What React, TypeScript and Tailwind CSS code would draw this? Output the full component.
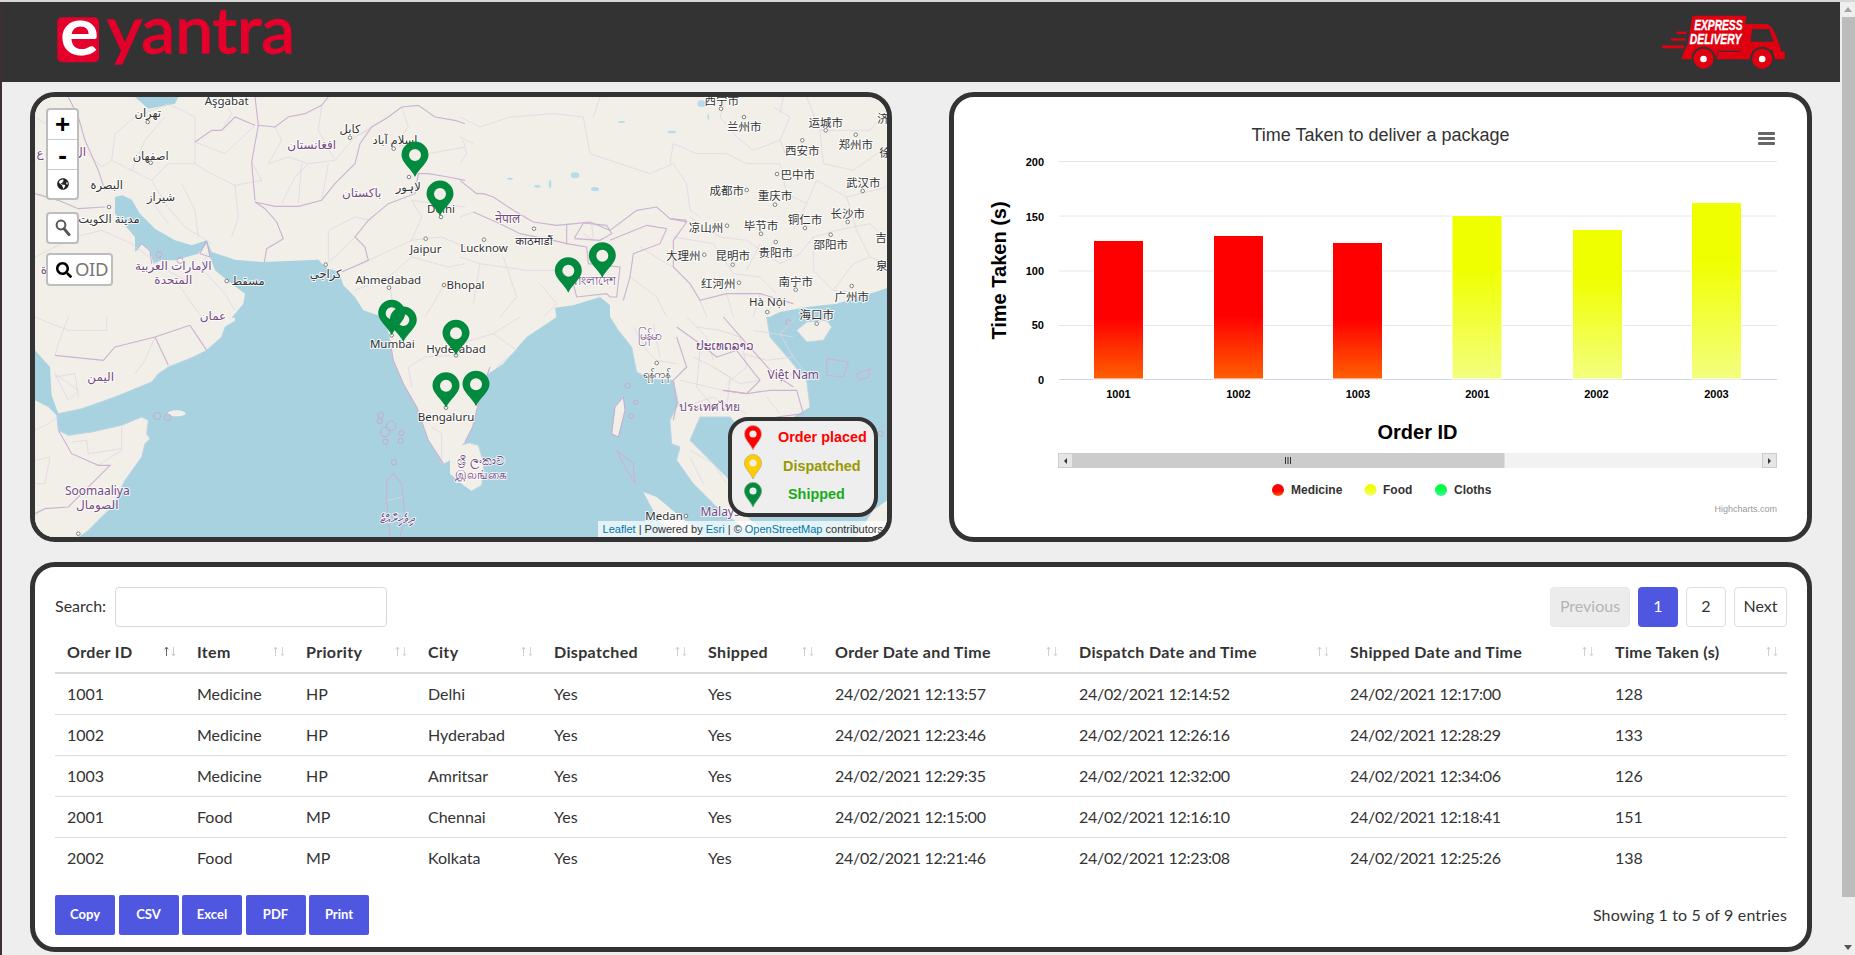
import { FaGlobeAmericas, FaSearch } from "react-icons/fa";

const UI = "font-['Lato','Noto_Sans',sans-serif]";

const heads: [string, number][] = [
  ["Order ID", 130],
  ["Item", 109],
  ["Priority", 122],
  ["City", 126],
  ["Dispatched", 154],
  ["Shipped", 127],
  ["Order Date and Time", 244],
  ["Dispatch Date and Time", 271],
  ["Shipped Date and Time", 265],
  ["Time Taken (s)", 184],
];

const rows = [
  ["1001", "Medicine", "HP", "Delhi", "Yes", "Yes", "24/02/2021 12:13:57", "24/02/2021 12:14:52", "24/02/2021 12:17:00", "128"],
  ["1002", "Medicine", "HP", "Hyderabad", "Yes", "Yes", "24/02/2021 12:23:46", "24/02/2021 12:26:16", "24/02/2021 12:28:29", "133"],
  ["1003", "Medicine", "HP", "Amritsar", "Yes", "Yes", "24/02/2021 12:29:35", "24/02/2021 12:32:00", "24/02/2021 12:34:06", "126"],
  ["2001", "Food", "MP", "Chennai", "Yes", "Yes", "24/02/2021 12:15:00", "24/02/2021 12:16:10", "24/02/2021 12:18:41", "151"],
  ["2002", "Food", "MP", "Kolkata", "Yes", "Yes", "24/02/2021 12:21:46", "24/02/2021 12:23:08", "24/02/2021 12:25:26", "138"],
];

const bars: [number, number, string, string, number][] = [
  [1118.5, 240.5, "1001", "url(#gr)", 1118.5],
  [1238.5, 235.5, "1002", "url(#gr)", 1238.5],
  [1357.5, 242.5, "1003", "url(#gr)", 1358],
  [1477, 215.5, "2001", "url(#gy)", 1477.5],
  [1597.5, 229.5, "2002", "url(#gy)", 1596.5],
  [1716.5, 202.5, "2003", "url(#gy)", 1716.5],
];

const cityLabels: [number, number, string][] = [
  [226.7, 101, "Aşgabat"], [147.7, 112.7, "تهران"], [150.7, 156, "اصفهان"], [106.7, 185, "البصرة"],
  [161, 197, "شيراز"], [109, 218.7, "مدينة الكويت"], [248, 281, "مسقط"], [325.7, 274, "كراجي"],
  [388.3, 279.7, "Ahmedabad"], [465.5, 285, "Bhopal"], [425.7, 249, "Jaipur"], [408.3, 187, "لاہور"],
  [441, 208.7, "Delhi"], [350, 128.7, "كابل"], [395, 139.7, "اسلام آباد"], [721.7, 101, "西宁市"],
  [744.3, 127, "兰州市"], [825.7, 122.7, "运城市"], [802.3, 151, "西安市"], [855.7, 145.3, "郑州市"],
  [797.7, 175.3, "巴中市"], [863.3, 183, "武汉市"], [726.7, 191.3, "成都市"], [775, 196.3, "重庆市"],
  [847.7, 213.7, "长沙市"], [805, 220.3, "铜仁市"], [761, 226, "毕节市"], [706, 227.7, "凉山州"],
  [830.7, 244.7, "邵阳市"], [775.7, 252.7, "贵阳市"], [732.7, 256.3, "昆明市"], [683.3, 256.3, "大理州"],
  [718.3, 284.3, "红河州"], [795.7, 282, "南宁市"], [851.7, 297, "广州市"], [767.3, 302, "Hà Nội"],
  [816.7, 315.3, "海口市"], [881, 238, "吉"], [881.7, 266, "泉"], [883, 118.7, "济"], [885, 153, "徐"],
  [534, 241, "काठमाडौं"], [484, 248, "Lucknow"], [656.7, 373.7, "ရန်ကုန်"], [664, 516.3, "Medan"],
  [392.3, 344.3, "Mumbai"], [456, 348.7, "Hyderabad"], [446, 417, "Bengaluru"],
];

const countryLabels: [number, number, string][] = [
  [173.3, 266, "الإمارات العربية"], [173.3, 279.7, "المتحدة"], [361.7, 193, "باكستان"], [311.7, 145.3, "افغانستان"],
  [507.7, 218.7, "नेपाल"], [593.3, 281, "বাংলাদেশ"], [649, 336, "မြန်မာ"], [725, 346, "ປະເທດລາວ"],
  [793.3, 374.7, "Việt Nam"], [709.3, 407, "ประเทศไทย"], [725, 512, "Malaysia"], [481, 461, "ශ්‍රී ලංකාව"],
  [481, 475, "இலங்கை"], [100.7, 377, "اليمن"], [97.3, 491.3, "Soomaaliya"], [97.3, 505.3, "الصومال"],
  [396.7, 519.3, "ދިވެހިރާއްޖެ"], [213, 316, "عمان"], [80, 152, "ال"], [40, 153, "ع"], [44, 270, "ة"],
];

const dots: [number, number][] = [
  [147.7, 122], [150.7, 162.7], [109, 207], [226.7, 281], [325.7, 264.7], [389, 287.7], [444, 285], [425.7, 238.7],
  [409, 177], [441, 217], [350, 137.7], [393.7, 148.7], [721, 108.7], [744, 117], [825.7, 130.3], [802.3, 140.3],
  [855.7, 134.7], [777, 174], [862.7, 191], [746.7, 190], [775, 204.7], [847.7, 222], [805, 228], [761, 233.7],
  [727, 225.7], [830.7, 234.7], [775.7, 242], [732.7, 264.7], [704.3, 254.7], [739, 282.7], [795.7, 289.7],
  [851.7, 286], [767.3, 312], [816.7, 323.7], [534, 228.7], [484, 239.7], [656.7, 363], [686, 516], [391.7, 335.3],
  [456, 355.3], [446, 407.7], [78.3, 533.7],
];

const pins: [number, number][] = [
  [415, 177], [440, 216], [568.3, 292.7], [602.3, 277.7], [391.7, 335.3], [403.3, 342], [456, 355.3], [446, 407.7], [476, 406.3],
];

const PIN = "M0,0 C-4,-9 -13.5,-14 -13.5,-22 A13.5,13.5 0 1 1 13.5,-22 C13.5,-14 4,-9 0,0 Z M6,-22 A6,6 0 1 0 -6,-22 A6,6 0 1 0 6,-22 Z";

const mainBorders = {
  a: [
    "M660,0 L670,85 L720,90 L760,60 L810,50 L860,25 L880,0", "M670,85 L650,195 L660,310",
    "M660,315 L690,335 L725,375 L745,425 L695,455 L688,495",
    "M660,315 L720,328 L790,328 L860,310 L900,260 L960,200 L975,140 L1010,90 L1060,60 L1100,30 L1150,25 L1200,60 L1260,70 L1290,80",
    "M1290,250 L1240,240 L1180,230 L1150,230 L1140,290 L1060,320 L1000,370 L960,420 L990,450 L1000,490 L920,525",
    "M480,135 L530,100 L560,100 L600,60 L660,85", "M210,280 L190,220 L150,130 L130,60 L100,0", "M0,290 L70,310 L130,335 L210,330",
  ],
  b: [
    "M0,250 L50,290 L70,290 L100,300 L160,340 L220,375 L290,385 L345,380 L390,375 L450,400 L530,340 L590,330 L630,365 L680,370",
    "M40,345 L120,380 L180,410 L280,430 L320,440 L320,380", "M345,420 L370,378 L440,385 L455,410 L420,430 L345,425 Z",
    "M320,440 L380,450 L385,500 L480,510 L470,600 L450,600 L440,590 L350,600 L340,560 L300,520",
    "M450,430 L560,385 L620,395 L600,440 L520,470 L510,540 L490,610",
    "M630,365 L680,375 L640,430 L640,510 L690,560 L720,610 L800,590 L900,590 L1000,620",
  ],
  c: [
    "M60,115 L205,130 L240,90 L360,60 L465,25", "M360,60 L400,145", "M465,25 L515,100",
    "M70,340 L110,410 L190,445 L225,445 L100,570 L30,575 L0,590", "M1065,70 L1075,130 L1105,200 L1145,270 L1180,370 L1225,440",
    "M1055,490 L1075,470 L1100,500 L1110,600 L1095,660", "M1055,490 L1055,550 L1065,660",
  ],
  d: [
    "M650,60 L680,150 L640,190 L650,260 L640,310", "M650,30 L720,80 L770,120 L830,100 L900,190 L860,230 L790,220",
    "M790,0 L860,80 L940,170 L1000,210", "M790,220 L860,230 L930,220 L1010,220 L1030,290 L950,300",
    "M1100,125 L1165,135 L1150,180 L1100,175 Z", "M1190,170 L1230,155 L1225,180 L1195,190 Z",
    "M470,400 L520,440 L525,500 L490,440 Z", "M90,150 L65,220 L50,280 L38,330 L15,375",
  ],
};

const thinBorders = {
  a: [
    "M480,135 L480,200 L520,225 L600,265 L610,360 L590,420", "M480,200 L400,200 L350,250 L390,320 L450,390 L530,440",
    "M300,60 L240,110 L230,190 L290,220 L350,250", "M440,260 L480,340 L490,420", "M820,200 L780,240 L740,320", "M800,200 L790,320",
    "M880,200 L860,310", "M1000,100 L960,120 L900,190 L820,200 L760,180 L700,200", "M880,490 L880,400 L960,360 L1010,370",
    "M960,420 L900,480 L870,500", "M560,100 L590,50 L560,0", "M300,60 L400,20 L480,60 L480,135", "M0,60 L60,100 L130,140 L200,210 L230,190",
    "M0,480 L120,420 L200,400 L290,440", "M430,560 L470,620 L500,660", "M515,470 L505,520 L570,590 L600,640",
    "M1290,330 L1200,320 L1130,310 L1160,360 L1130,430 L1000,490", "M1130,430 L1220,420 L1290,450",
    "M960,580 L1060,540 L1130,480 L1240,510 L1290,500", "M1060,540 L1080,660", "M1230,560 L1170,660", "M1100,30 L1120,90 L1080,140 L1180,170",
    "M1180,170 L1290,150", "M720,90 L740,130 L700,200", "M860,25 L850,100 L900,190", "M1010,90 L960,120", "M130,60 L60,100", "M290,440 L380,510 L470,560",
    "M660,85 L570,170 L480,135", "M390,60 L330,130 L290,220", "M600,265 L680,250 L650,195", "M400,380 L340,300",
  ],
  b: [
    "M0,60 L60,90 L150,60 L280,50 L370,60 L390,170 L570,230 L640,200 L680,260 L690,340 L720,360",
    "M630,200 L640,140 L710,170 L800,170 L860,200 L960,200 L980,290", "M980,290 L1040,320 L1000,400",
    "M1040,320 L1070,250 L1160,300 L1280,270", "M690,360 L780,420 L860,430 L960,500 L1020,470 L1060,420",
    "M1060,420 L1130,400 L1230,380 L1280,430", "M1060,420 L1060,520 L1120,580 L1230,590", "M640,420 L760,440 L820,530 L900,540 L950,590",
    "M900,440 L860,520", "M1080,100 L1090,200 L1180,220 L1280,150", "M960,50 L970,0", "M940,30 L990,60 L960,130 L980,180",
    "M800,0 L780,60 L830,120 L880,160 L960,130", "M1040,0 L1080,100 L1230,100 L1280,40", "M420,0 L400,60", "M0,360 L40,345",
    "M0,200 L20,170 L10,130", "M60,500 L200,520 L300,520", "M130,480 L170,600 L120,660", "M0,480 L60,500 L40,620",
    "M240,560 L290,620 L250,660", "M540,450 L620,500 L640,510", "M510,540 L590,600 L620,660", "M720,610 L740,660", "M800,590 L820,660", "M900,590 L880,660",
    "M370,410 L400,430", "M395,380 L400,425", "M0,120 L40,140", "M1160,300 L1190,400 L1230,480 L1280,500", "M1120,580 L1180,500 L1230,480",
  ],
  c: [
    "M110,375 L155,370 L160,410 L260,395", "M190,445 L260,400 L260,330", "M300,170 L330,130 L360,60", "M60,170 L100,250 L130,220 L60,170",
    "M0,0 L100,40 L215,40 L215,0", "M0,340 L40,320 L70,300", "M100,0 L70,80 L60,115", "M1120,150 L1170,120 L1260,115 L1290,130",
    "M1190,330 L1220,350 L1220,440", "M1120,150 L1130,210", "M60,180 L120,170 L130,240", "M1055,550 L1105,540", "M1060,590 L1100,590",
    "M0,430 L45,420 L30,500 L0,500",
  ],
  d: [
    "M700,120 L760,150 L810,180 L800,280", "M720,100 L710,210 L770,280", "M660,190 L790,220", "M850,110 L920,130 L1000,120", "M880,40 L1000,60",
    "M1000,120 L1040,170", "M1010,0 L960,50 L1000,120", "M0,80 L100,50 L180,0", "M100,50 L170,100 L110,150", "M520,30 L560,100 L590,130 L650,140",
    "M580,20 L600,120", "M690,400 L760,440 L800,500", "M690,420 L730,500", "M680,0 L740,60 L760,130", "M840,60 L860,150 L800,200", "M920,240 L960,290",
    "M760,150 L840,200 L900,190", "M710,30 L780,40 L840,60", "M960,200 L1010,160", "M700,260 L760,240 L860,290",
  ],
};

function Lines({ main, thin }: { main: string[]; thin: string[] }) {
  return (
    <>
      {thin.map((d, i) => (
        <path key={i} d={d} fill="none" stroke="#e0d5e3" strokeWidth={2.4} />
      ))}
      {main.map((d, i) => (
        <path key={i} d={d} fill="none" stroke="#cbb3d1" strokeWidth={3.4} />
      ))}
    </>
  );
}

function WorldMap() {
  return (
    <svg width={852} height={440} viewBox="35 97 852 440" className="block font-['Noto_Sans','Noto_Sans_CJK_SC','DejaVu_Sans',sans-serif]">
      <rect x={35} y={97} width={852} height={440} fill="#f2efe9" />
      <g transform="translate(35 317) scale(0.33333)">
        <rect x={0} y={0} width={1290} height={660} fill="#a9d2e0" />
        <g fill="#f2efe9">
          <path d="M0,-8 L600,-8 L600,12 L570,30 L560,60 L515,100 L475,120 L400,150 L370,170 L350,195 L240,240 L140,275 L70,290 L50,250 L40,150 L0,130 Z" />
          <path d="M0,250 L40,270 L65,295 L70,340 L100,355 L170,345 L260,325 L320,300 L340,310 L335,350 L345,365 L330,380 L320,420 L270,490 L230,570 L160,640 L130,660 L0,660 Z" />
          <path d="M1045,-8 L1050,0 L1065,70 L1075,130 L1105,200 L1145,270 L1180,370 L1225,440 L1255,425 L1295,375 L1295,-8 Z" />
          <ellipse cx={425} cy={289} rx={27} ry={9} />
        </g>
        <g fill="none" stroke="#bcd5e2" strokeWidth={3}>
          <path d="M600,12 L570,30 L560,60 L515,100 L475,120 L400,150 L370,170 L350,195 L240,240 L140,275 L70,290" />
          <path d="M65,295 L70,340 L100,355 L170,345 L260,325 L320,300 L340,310 L335,350 L345,365 L330,380 L320,420 L270,490 L230,570 L160,640" />
        </g>
        <path d="M0,100 L45,150 L50,235 L70,290 L45,270 L0,190 Z" fill="#a9d2e0" />
        <g fill="none" stroke="#c6a9cc" strokeWidth={3}>
          <circle cx={366} cy={297} r={11} />
          <circle cx={398} cy={301} r={10} />
          <circle cx={1037} cy={295} r={9} />
          <circle cx={1034} cy={312} r={8} />
          <circle cx={1050} cy={345} r={14} />
          <circle cx={1068} cy={326} r={14} />
          <circle cx={1099} cy={348} r={8} />
          <circle cx={1097} cy={372} r={8} />
          <circle cx={1051} cy={374} r={8} />
          <circle cx={1077} cy={436} r={8} />
        </g>
        <Lines main={mainBorders.c} thin={thinBorders.c} />
      </g>
      <g transform="translate(460 317) scale(0.33333)">
        <rect x={-15} y={0} width={1305} height={660} fill="#a9d2e0" />
        <g fill="#f2efe9">
          <path d="M-30,-8 L295,-8 L290,0 L200,60 L130,140 L85,170 L65,220 L50,280 L38,330 L15,375 L-30,420 Z" />
          <path d="M-30,395 L30,378 L55,385 L72,440 L65,505 L35,522 L5,500 L-30,470 Z" />
          <path d="M445,-8 L450,0 L475,40 L515,90 L530,165 L570,185 L640,190 L655,260 L630,310 L635,380 L660,390 L650,430 L700,500 L760,560 L860,640 L930,660 L850,590 L800,480 L720,400 L690,370 L720,300 L810,300 L840,335 L900,340 L1000,300 L1050,270 L1040,190 L990,130 L930,60 L920,0 L915,-8 Z" />
          <path d="M1010,40 L1040,15 L1100,10 L1115,30 L1090,70 L1040,75 Z" />
          <path d="M465,270 L490,240 L495,280 L475,360 L455,350 Z" />
          <path d="M550,525 L590,540 L650,590 L700,630 L740,670 L640,670 L590,600 Z" />
          <path d="M1180,670 L1240,580 L1295,540 L1295,670 Z" />
        </g>
        <g fill="none" stroke="#bcd5e2" strokeWidth={3}>
          <path d="M450,0 L475,40 L515,90 L530,165 L570,185 L640,190 L655,260 L630,310 L635,380 L660,390 L650,430 L700,500 L760,560" />
          <path d="M800,480 L720,400 L690,370 L720,300 L810,300 L840,335" />
          <path d="M1050,270 L1040,190 L990,130 L930,60 L920,0" />
          <path d="M1010,40 L1040,15 L1100,10 L1115,30 L1090,70 L1040,75 Z" />
          <path d="M30,378 L55,385 L72,440 L65,505 L35,522" />
        </g>
        <g fill="none" stroke="#c6a9cc" strokeWidth={3}>
          <circle cx={503} cy={206} r={8} />
          <circle cx={527} cy={256} r={7} />
          <circle cx={513} cy={297} r={7} />
          <circle cx={985} cy={16} r={8} />
          <circle cx={1262} cy={350} r={8} />
          <path d="M465,270 L490,240 L495,280 L475,360 L455,350 Z" />
        </g>
        <Lines main={mainBorders.d} thin={thinBorders.d} />
      </g>
      <g transform="translate(35 97) scale(0.33333)">
        <path
          d="M240,300 L262,295 L290,308 L315,350 L360,395 L420,430 L470,445 L515,430 L530,465 L600,488 L680,495 L760,492 L850,488 L870,510 L912,525 L925,565 L960,600 L985,640 L1050,662 L590,662 L625,620 L630,590 L590,560 L540,520 L525,480 L515,440 L490,470 L420,490 L380,490 L355,500 L345,460 L320,440 L300,465 L300,420 L240,350 Z"
          fill="#a9d2e0"
        />
        <path d="M300,0 L430,0 L420,20 L340,35 Z" fill="#a9d2e0" />
        <g fill="none" stroke="#c6a9cc" strokeWidth={3}>
          <circle cx={372} cy={473} r={9} />
          <circle cx={435} cy={490} r={9} />
          <path d="M305,460 L320,440 L345,462 L350,500" />
          <path d="M515,430 L495,470 L525,480 L515,430" />
        </g>
        <Lines main={mainBorders.a} thin={thinBorders.a} />
      </g>
      <g transform="translate(460 97) scale(0.33333)">
        <path d="M290,664 L285,632 L340,625 L420,600 L450,625 L450,664 Z" fill="#a9d2e0" />
        <path d="M920,664 L960,645 L1040,630 L1130,620 L1230,590 L1290,570 L1290,664 Z" fill="#a9d2e0" />
        <g fill="#b6dcea">
          <ellipse cx={345} cy={235} rx={13} ry={9} />
          <ellipse cx={405} cy={276} rx={12} ry={6} />
          <ellipse cx={232} cy={268} rx={10} ry={4} />
          <ellipse cx={725} cy={20} rx={13} ry={10} />
          <ellipse cx={635} cy={105} rx={13} ry={4} />
          <ellipse cx={150} cy={245} rx={9} ry={3} />
          <ellipse cx={270} cy={262} rx={4} ry={12} />
          <ellipse cx={485} cy={75} rx={10} ry={3} />
          <ellipse cx={745} cy={60} rx={3} ry={9} />
        </g>
        <Lines main={mainBorders.b} thin={thinBorders.b} />
      </g>
      {countryLabels.map(([x, y, t]) => (
        <text key={t} x={x} y={y + 4} textAnchor="middle" fontSize={12} fill="#764a83" stroke="#ffffff" strokeOpacity={0.75} strokeWidth={2} className="[paint-order:stroke]">
          {t}
        </text>
      ))}
      {cityLabels.map(([x, y, t]) => (
        <text key={t} x={x} y={y + 4} textAnchor="middle" fontSize={11.5} fill="#333333" stroke="#ffffff" strokeOpacity={0.85} strokeWidth={2} className="[paint-order:stroke]">
          {t}
        </text>
      ))}
      {dots.map(([x, y], i) => (
        <circle key={i} cx={x} cy={y} r={1.8} fill="#ffffff" stroke="#666666" strokeWidth={0.8} />
      ))}
      {pins.map(([x, y], i) => (
        <path key={i} transform={`translate(${x} ${y})`} d={PIN} fill="#028a3f" fillRule="evenodd" />
      ))}
    </svg>
  );
}

function LegendPin({ color, stroke }: { color: string; stroke: string }) {
  return (
    <svg width={20} height={26} viewBox="-10 -25 20 26" className="shrink-0">
      <path d="M0,0 C-3,-7 -8.5,-10 -8.5,-16 A8.5,8.5 0 1 1 8.5,-16 C8.5,-10 3,-7 0,0 Z" fill={color} stroke={stroke} strokeWidth={0.8} />
      <circle cx={0} cy={-16} r={3.6} fill="#eeeeee" />
    </svg>
  );
}

function MapCard() {
  const legend: [string, string, string, string, string][] = [
    ["#ff0000", "#d8a0a0", "Order placed", "text-[#ff0000]", "ml-[15px]"],
    ["#ffcc00", "#b8b080", "Dispatched", "text-[#999900]", "ml-[20px]"],
    ["#028a3f", "#70a080", "Shipped", "text-[#1aab1a]", "ml-[25px]"],
  ];
  return (
    <div className="relative w-[862px] h-[450px] border-[5px] border-[#333] rounded-[25px] overflow-hidden bg-[#f2efe9]">
      <WorldMap />
      <div className="absolute left-[11px] top-[11px] flex flex-col items-start">
        <div className="w-[33px] h-[92px] rounded-[4px] border-2 border-[#bdbdbd] bg-white flex flex-col text-black">
          <div className="h-[30px] flex items-center justify-center border-b border-[#ccc] text-[26px] font-bold font-['Liberation_Sans',sans-serif] leading-none pb-[2px]">+</div>
          <div className="h-[30px] flex items-center justify-center border-b border-[#ccc] text-[26px] font-bold font-['Liberation_Sans',sans-serif] leading-none">-</div>
          <div className="flex-1 flex items-center justify-center">
            <FaGlobeAmericas className="w-[12px] h-[12px] text-[#222]" />
          </div>
        </div>
        <div className="mt-[12px] w-[33px] h-[32px] rounded-[4px] border-2 border-[#bdbdbd] bg-white flex items-center justify-center">
          <svg width={16} height={18} viewBox="0 0 16 18">
            <circle cx={6} cy={6} r={4.4} fill="none" stroke="#555" strokeWidth={2} />
            <path d="M9,9.6 L14,15.6" stroke="#555" strokeWidth={3} strokeLinecap="round" />
          </svg>
        </div>
        <div className="mt-[9px] w-[67px] h-[33px] rounded-[4px] border-2 border-[#bdbdbd] bg-white flex items-center pl-[8px] gap-[3px]">
          <FaSearch className="w-[16px] h-[16px] text-black shrink-0" />
          <span className="text-[18.5px] tracking-[-0.4px] leading-none text-[#777] font-['Noto_Sans',sans-serif]">OID</span>
        </div>
      </div>
      <div className="absolute left-[693px] top-[320px] w-[150px] h-[100px] rounded-[20px] border-4 border-[#333] bg-[#eee] flex flex-col pl-[11px] pt-[3px] font-['Liberation_Sans',sans-serif] text-[14.4px] font-bold">
        {legend.map(([c, s, t, cls, ml]) => (
          <div key={t} className="h-[28.5px] flex items-center">
            <LegendPin color={c} stroke={s} />
            <span className={`${cls} ${ml} whitespace-nowrap`}>{t}</span>
          </div>
        ))}
      </div>
      <div className="absolute right-0 bottom-0 h-[16px] pl-[5px] pr-[4px] bg-white/70 flex items-center text-[11px] leading-none text-[#333] font-['Liberation_Sans',sans-serif] whitespace-nowrap">
        <span className="text-[#0078a8]">Leaflet</span>&nbsp;|&nbsp;Powered by&nbsp;<span className="text-[#0078a8]">Esri</span>&nbsp;|&nbsp;©&nbsp;<span className="text-[#0078a8]">OpenStreetMap</span>&nbsp;contributors
      </div>
    </div>
  );
}

function ChartCard() {
  return (
    <div className="w-[863px] h-[450px] border-[5px] border-[#333] rounded-[25px] overflow-hidden bg-white">
      <svg width={853} height={440} viewBox="954 97 853 440" className="block font-['Liberation_Sans',sans-serif]">
        <defs>
          <linearGradient id="gr" x1="0" y1="0" x2="0" y2="1">
            <stop offset="0.56" stopColor="#ff0000" />
            <stop offset="1" stopColor="#ff6000" />
          </linearGradient>
          <linearGradient id="gy" x1="0" y1="0" x2="0" y2="1">
            <stop offset="0.33" stopColor="#f0ff00" />
            <stop offset="1" stopColor="#f4ff80" />
          </linearGradient>
          <linearGradient id="gg" x1="0" y1="0" x2="0" y2="1">
            <stop offset="0.4" stopColor="#00ff40" />
            <stop offset="1" stopColor="#40f0a0" />
          </linearGradient>
        </defs>
        <text x={1380.5} y={141} textAnchor="middle" fontSize={18} fill="#333333">Time Taken to deliver a package</text>
        <g fill="#666666">
          <rect x={1758} y={132} width={17} height={3} rx={1} />
          <rect x={1758} y={137} width={17} height={3} rx={1} />
          <rect x={1758} y={142} width={17} height={3} rx={1} />
        </g>
        {[161.5, 216, 271, 325.5].map((y) => (
          <line key={y} x1={1059} x2={1777} y1={y} y2={y} stroke="#e6e6e6" strokeWidth={1} />
        ))}
        <line x1={1059} x2={1777} y1={379.5} y2={379.5} stroke="#ccd6eb" strokeWidth={1} />
        {([[200, 166], [150, 220.5], [100, 275], [50, 329], [0, 383.5]] as [number, number][]).map(([v, y]) => (
          <text key={v} x={1044} y={y} textAnchor="end" fontSize={11} fontWeight={700} fill="#000000">{v}</text>
        ))}
        {bars.map(([cx, top, label, fill, lx]) => (
          <g key={label}>
            <rect x={cx - 25} y={top} width={50} height={379 - top} fill={fill} stroke="#ffffff" strokeWidth={1} />
            <text x={lx} y={398} textAnchor="middle" fontSize={11} fontWeight={700} fill="#000000">{label}</text>
          </g>
        ))}
        <text transform="translate(1006 270.5) rotate(-90)" textAnchor="middle" fontSize={20} fontWeight={700} fill="#000000">Time Taken (s)</text>
        <text x={1417.5} y={439} textAnchor="middle" fontSize={20} fontWeight={700} fill="#000000">Order ID</text>
        <rect x={1058} y={453} width={719} height={15} fill="#f2f2f2" />
        <rect x={1058.5} y={453.5} width={14} height={14} fill="#e6e6e6" stroke="#cccccc" />
        <rect x={1762.5} y={453.5} width={14} height={14} fill="#e6e6e6" stroke="#cccccc" />
        <path d="M1067,458 L1064,461 L1067,464 Z" fill="#333333" />
        <path d="M1768,458 L1771,461 L1768,464 Z" fill="#333333" />
        <rect x={1073} y={453} width={431.5} height={15} fill="#cccccc" />
        <path d="M1285.5,457 V464 M1288,457 V464 M1290.5,457 V464" stroke="#333333" strokeWidth={1} />
        <g fontSize={12} fontWeight={700} fill="#333333">
          <circle cx={1278} cy={490} r={6} fill="url(#gr)" />
          <text x={1291} y={494}>Medicine</text>
          <circle cx={1370.5} cy={490} r={6} fill="url(#gy)" />
          <text x={1383} y={494}>Food</text>
          <circle cx={1441} cy={490} r={6} fill="url(#gg)" />
          <text x={1454} y={494}>Cloths</text>
        </g>
        <text x={1777} y={512} textAnchor="end" fontSize={9} fill="#999999">Highcharts.com</text>
      </svg>
    </div>
  );
}

function SortArrows({ active }: { active: boolean }) {
  return (
    <svg width={14} height={11} viewBox="0 0 14 11" className="shrink-0">
      <path d="M3.5,10 V1.5 M1.8,3.3 L3.5,1 L5.2,3.3" fill="none" stroke={active ? "#666" : "#cfcfcf"} strokeWidth={1} />
      <path d="M10.5,1 V9.5 M8.8,7.7 L10.5,10 L12.2,7.7" fill="none" stroke={active ? "#c8c8d0" : "#d8d8e0"} strokeWidth={1} />
    </svg>
  );
}

function TableCard() {
  return (
    <div className={`w-[1782px] h-[390px] border-[5px] border-[#333] rounded-[25px] bg-white pl-[20px] pr-[20px] pt-[20px] text-[16px] text-[#333] ${UI}`}>
      <div className="flex items-center justify-between h-[40px]">
        <div className="flex items-center gap-[9px]">
          <span className="pb-[3px]">Search:</span>
          <div className="w-[272px] h-[40px] border border-[#d9d9d9] rounded-[4px] bg-white" />
        </div>
        <div className="flex items-center">
          <div className="w-[80px] h-[40px] pb-[2px] rounded-[4px] border border-[#e8e8e8] bg-[#ececec] text-[#b5b5b5] flex items-center justify-center">Previous</div>
          <div className="ml-[8px] w-[40px] h-[40px] pb-[2px] rounded-[4px] bg-[#4f57e0] text-white flex items-center justify-center">1</div>
          <div className="ml-[8px] w-[40px] h-[40px] pb-[2px] rounded-[4px] border border-[#ddd] flex items-center justify-center">2</div>
          <div className="ml-[8px] w-[53px] h-[40px] pb-[2px] rounded-[4px] border border-[#ddd] flex items-center justify-center">Next</div>
        </div>
      </div>
      <table className="mt-[4px] w-[1732px] table-fixed border-collapse">
        <colgroup>
          {heads.map(([h, w]) => (
            <col key={h} style={{ width: w }} />
          ))}
        </colgroup>
        <thead>
          <tr className="h-[42px] border-b-2 border-[#d9d9d9]">
            {heads.map(([h], i) => (
              <th key={h} className="pl-[12px] pr-[8px] text-left font-bold whitespace-nowrap">
                <div className="flex items-center justify-between">
                  <span className="tracking-[0.35px]">{h}</span>
                  <SortArrows active={i === 0} />
                </div>
              </th>
            ))}
          </tr>
        </thead>
        <tbody>
          {rows.map((r, i) => (
            <tr key={r[0]} className={i < 4 ? "h-[41px] border-b border-[#dcdcdc]" : "h-[41px]"}>
              {r.map((c, j) => (
                <td key={j} className={j >= 6 && j <= 8 ? "pl-[12px] whitespace-nowrap tracking-[-0.3px]" : "pl-[12px] whitespace-nowrap"}>{c}</td>
              ))}
            </tr>
          ))}
        </tbody>
      </table>
      <div className="mt-[17px] flex items-center justify-between h-[40px]">
        <div className="flex items-center gap-[3.5px]">
          {["Copy", "CSV", "Excel", "PDF", "Print"].map((b) => (
            <div key={b} className="w-[60px] h-[40px] rounded-[2px] bg-[#4f57e0] text-white text-[13px] font-bold flex items-center justify-center">{b}</div>
          ))}
        </div>
        <span className="tracking-[0.17px]">Showing 1 to 5 of 9 entries</span>
      </div>
    </div>
  );
}

function Truck() {
  return (
    <svg width={123} height={54} viewBox="487 45 368 162" className="block font-['Liberation_Sans',sans-serif]">
      <g fill="#e00010">
        <path d="M578,47 L740,47 L722,152 L655,152 L645,178 L545,178 L553,152 L563,134 Z" />
        <path d="M735,72 L800,72 C815,76 825,90 845,155 L855,155 L855,178 L825,178 L818,150 L760,150 L748,178 L650,178 L655,156 L722,156 Z" />
        <rect x={530} y={95} width={30} height={7} />
        <rect x={513} y={115} width={44} height={7} />
        <rect x={487} y={136} width={65} height={9} />
      </g>
      <path d="M757,87 L808,87 L822,125 L752,125 Z" fill="#333333" />
      <circle cx={611} cy={176} r={36} fill="#333333" />
      <circle cx={787} cy={176} r={36} fill="#333333" />
      <circle cx={611} cy={176} r={30} fill="#e00010" />
      <circle cx={787} cy={176} r={30} fill="#e00010" />
      <circle cx={611} cy={177} r={10} fill="#ffffff" />
      <circle cx={787} cy={177} r={10} fill="#ffffff" />
      <g fontSize={46} fontWeight={700} fontStyle="italic" fill="#ffffff" stroke="#ffffff" strokeWidth={1.2}>
        <text x={583} y={90} textLength={145} lengthAdjust="spacingAndGlyphs">EXPRESS</text>
        <text x={570} y={133} textLength={155} lengthAdjust="spacingAndGlyphs">DELIVERY</text>
      </g>
    </svg>
  );
}

function Logo() {
  return (
    <svg width={240} height={60} viewBox="57 10 240 60" className="block font-['Lato',sans-serif] mb-[4px]">
      <rect x={57.3} y={17.3} width={41.7} height={45} rx={5} fill="#e4002b" />
      <text x={60} y={55} fontSize={66} fontWeight={700} fill="#ffffff" textLength={39} lengthAdjust="spacingAndGlyphs">e</text>
      <text x={107} y={52.5} fontSize={64} fill="#e4002b" stroke="#e4002b" strokeWidth={1.5} textLength={188} lengthAdjust="spacingAndGlyphs">yantra</text>
    </svg>
  );
}

function Scrollbar() {
  return (
    <div className="w-[15px] bg-[#eee] flex flex-col items-end">
      <div className="w-full h-[15px] flex items-center justify-center">
        <div className="w-0 h-0 border-x-[4px] border-x-transparent border-b-[5px] border-b-[#a3a3a3]" />
      </div>
      <div className="w-[13px] h-[880px] bg-[#bcbcbc]" />
      <div className="flex-1" />
      <div className="w-full h-[15px] flex items-center justify-center">
        <div className="w-0 h-0 border-x-[4px] border-x-transparent border-t-[5px] border-t-[#555]" />
      </div>
    </div>
  );
}

export default function App() {
  return (
    <div className="w-[1855px] h-[955px] overflow-hidden flex flex-col bg-[#eee]">
      <div className="h-[2px] bg-[#d6d6d6]" />
      <div className="flex-1 flex min-h-0">
        <div className="w-[2px] bg-[#3b3034]" />
        <div className="flex-1 min-w-0 flex flex-col">
          <header className="h-[80px] bg-[#333] flex items-center justify-between pl-[55px] pr-[55px]">
            <Logo />
            <Truck />
          </header>
          <div className="flex justify-between pl-[28px] pr-[28px] mt-[10px]">
            <MapCard />
            <ChartCard />
          </div>
          <div className="pl-[28px] mt-[20px]">
            <TableCard />
          </div>
        </div>
        <Scrollbar />
      </div>
    </div>
  );
}
